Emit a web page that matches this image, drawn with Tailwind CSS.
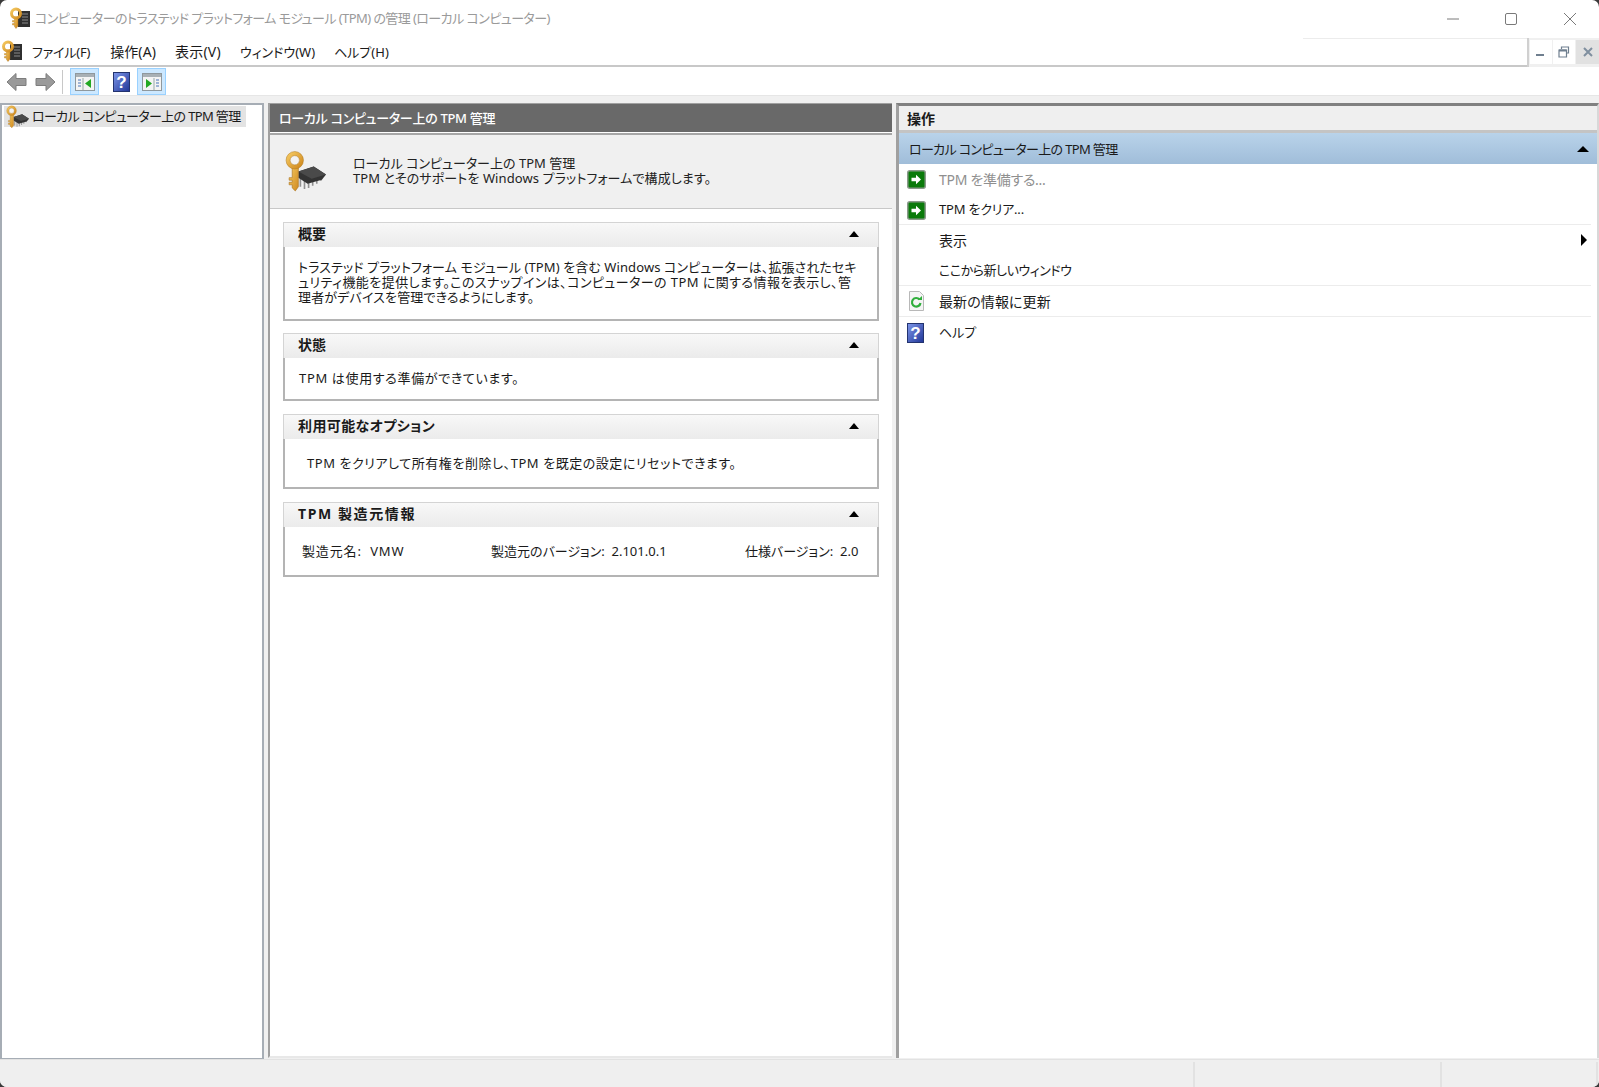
<!DOCTYPE html>
<html lang="ja">
<head>
    <meta charset="UTF-8">
    <title>TPM 管理</title>
    <script src="https://cdn.jsdelivr.net/npm/@tailwindcss/browser@4"></script>
</head>
<body class="bg-[#3a3a3a] overflow-hidden">
    <!-- shared icons -->
    <svg class="absolute w-0 h-0" xmlns="http://www.w3.org/2000/svg">
        <defs>
            <linearGradient id="helpfill" x1="0" y1="0" x2="1" y2="1">
                <stop offset="0" stop-color="#7f98ea"/>
                <stop offset="1" stop-color="#1f3496"/>
            </linearGradient>
            <linearGradient id="keyfill" x1="0" y1="0" x2="1" y2="1">
                <stop offset="0" stop-color="#f4c860"/>
                <stop offset="1" stop-color="#d08a20"/>
            </linearGradient>
        </defs>
        <symbol id="key" viewBox="0 0 42 42">
            <path d="M9 16h6v20l-3 4-3-3v-3h-3v-2.500h3v-2h-3v-2.500h3z" fill="url(#keyfill)" stroke="#a8701c" stroke-width=".6"/>
            <circle cx="11.500" cy="10" r="6.500" fill="none" stroke="url(#keyfill)" stroke-width="4"/>
            <circle cx="11.500" cy="10" r="8.500" fill="none" stroke="#b07a20" stroke-width=".5"/>
            <circle cx="11.500" cy="10" r="4.500" fill="#f3f3f3" stroke="#b07a20" stroke-width=".5"/>
        </symbol>
        <symbol id="keychip" viewBox="0 0 42 42">
            <path d="M17 27v9M21 29v9M25 30v7M29 29v6M33 28v5M37 26v4" stroke="#8f8f8f" stroke-width="1.600"/>
            <path d="M15 21l15-5 12 8-4 5-14 4-9-6z" fill="#333"/>
            <path d="M15 21l15-5 12 8-14 4z" fill="#4a4a4a"/>
            <use href="#key" width="42" height="42"/>
        </symbol>
        <symbol id="keybook" viewBox="0 0 20 22">
            <rect x="8" y="4" width="12" height="16" fill="#2f2f2f"/>
            <path d="M12 7h6M12 10h6M12 13h6M12 16h6" stroke="#8a8a8a" stroke-width="1"/>
            <path d="M4.500 10h3.500v9l-2 2.500-1.500-2v-1.500h-2v-1.500h2v-1.500h-2v-1.500h2z" fill="url(#keyfill)" stroke="#a8701c" stroke-width=".4"/>
            <circle cx="6" cy="6.500" r="4.500" fill="none" stroke="url(#keyfill)" stroke-width="3"/>
        </symbol>
        <symbol id="go" viewBox="0 0 19 19">
            <rect x=".75" y=".75" width="17.500" height="17.500" rx="2" fill="#0a7a0a" stroke="#8b9a8b" stroke-width="1.500"/>
            <path d="M4.500 7.800h4.500v-3l5 4.700-5 4.700v-3h-4.500z" fill="#fff"/>
        </symbol>
    </svg>

    <div class="w-[1599px] h-[1087px] flex flex-col bg-white rounded-[7px] overflow-hidden [font-family:'Noto_Sans','Noto_Sans_CJK_JP',sans-serif] [font-feature-settings:'palt'] text-[#1a1a1a]">

        <!-- Title bar -->
        <div class="h-[38px] shrink-0 flex items-center pl-[10px]">
            <svg class="w-[20px] h-[22px] mb-[2px]"><use href="#keybook"/></svg>
            <span class="ml-[5px] text-[13px] tracking-[-0.57px] text-[#9a9a9a] mb-[1px]">コンピューターのトラステッド プラットフォーム モジュール (TPM) の管理 (ローカル コンピューター)</span>
            <div class="ml-auto flex items-center">
                <svg class="w-[14px] h-[14px]" viewBox="0 0 14 14"><path d="M1 7h12" stroke="#7a7a7a"/></svg>
                <svg class="w-[14px] h-[14px] ml-[44px]" viewBox="0 0 14 14"><rect x="1.500" y="1.500" width="11" height="11" rx="1.500" fill="none" stroke="#7a7a7a"/></svg>
                <svg class="w-[14px] h-[14px] ml-[45px] mr-[22px]" viewBox="0 0 14 14"><path d="M1 1l12 12M13 1l-12 12" stroke="#7a7a7a"/></svg>
            </div>
        </div>

        <!-- Menu bar -->
        <div class="h-[29px] shrink-0 flex relative">
            <div class="flex-1 flex items-center border-b-2 border-[#c8c8c8] pl-[2px]">
                <svg class="w-[20px] h-[22px] mb-[2px]"><use href="#keybook"/></svg>
                <div class="flex items-baseline ml-[10px] mt-px">
                    <span class="mr-[20px] text-[13px] tracking-[-0.2px]">ファイル(F)</span>
                    <span class="mr-[19px] text-[14px] tracking-[0.1px]">操作(A)</span>
                    <span class="mr-[19px] text-[14px] tracking-[0.2px]">表示(V)</span>
                    <span class="mr-[19px] text-[13px]">ウィンドウ(W)</span>
                    <span class="text-[13px]">ヘルプ(H)</span>
                </div>
            </div>
            <!-- MDI buttons -->
            <div class="w-[72px] shrink-0 border-l-2 border-[#d0d0d0] flex pl-px pt-[2px] gap-px bg-[#f0f0f0]">
                <div class="w-[22px] h-[24px] bg-white flex items-center justify-center">
                    <svg class="w-[12px] h-[12px]" viewBox="0 0 12 12"><path d="M1 9h8" stroke="#6f7f8f" stroke-width="2"/></svg>
                </div>
                <div class="w-[22px] h-[24px] bg-white flex items-center justify-center">
                    <svg class="w-[12px] h-[12px]" viewBox="0 0 12 12"><path d="M3.500 3V1h7v6h-2M1 4h7.500v7h-7.500z" fill="none" stroke="#6f7f8f" stroke-width="1.200"/><path d="M1 4.500h7.500" stroke="#6f7f8f" stroke-width="2"/></svg>
                </div>
                <div class="w-[23px] h-[24px] bg-[#e1e1e1] flex items-center justify-center">
                    <svg class="w-[12px] h-[12px]" viewBox="0 0 12 12"><path d="M2 2l8 8M10 2l-8 8" stroke="#7f8f9f" stroke-width="2"/></svg>
                </div>
            </div>
            <div class="absolute left-[1303px] w-[224px] top-0 h-px bg-[#ececec]"></div>
        </div>

        <!-- Toolbar -->
        <div class="h-[27px] shrink-0 flex items-center pl-[6px] pt-px border-b border-[#e6e6e6] box-content">
            <svg class="w-[21px] h-[20px]" viewBox="0 0 21 20"><path d="M1 10l9-8.500v5h10v7h-10v5z" fill="#9a9a9a" stroke="#7d7d7d"/></svg>
            <svg class="w-[21px] h-[20px] ml-[8px]" viewBox="0 0 21 20"><path d="M20 10l-9-8.500v5h-10v7h10v5z" fill="#9a9a9a" stroke="#7d7d7d"/></svg>
            <div class="w-px h-[24px] bg-[#c8c8c8] ml-[6px]"></div>
            <div class="w-[29px] h-[27px] ml-[7px] bg-[#cce8ff] border border-[#99d1ff] flex items-center justify-center">
                <svg class="w-[20px] h-[18px]" viewBox="0 0 20 18">
                    <rect x=".5" y=".5" width="19" height="17" fill="#f4f4f4" stroke="#8f989d"/>
                    <rect x="1" y="1" width="18" height="3" fill="#a8b0b5"/>
                    <path d="M3 7h3M3 10h3M3 13h3" stroke="#4a74b8"/>
                    <path d="M8 5v12" stroke="#9aa"/>
                    <path d="M16 6v9l-6-4.500z" fill="#23a823"/>
                </svg>
            </div>
            <svg class="w-[17px] h-[20px] ml-[14px]" viewBox="0 0 17 20">
                <rect x=".5" y=".5" width="16" height="19" fill="url(#helpfill)" stroke="#23336f"/>
                <text x="8.500" y="16" text-anchor="middle" font-size="17" font-weight="700" font-family="Liberation Sans" fill="#fff">?</text>
            </svg>
            <div class="w-[29px] h-[27px] ml-[7px] bg-[#cce8ff] border border-[#99d1ff] flex items-center justify-center">
                <svg class="w-[20px] h-[18px]" viewBox="0 0 20 18">
                    <rect x=".5" y=".5" width="19" height="17" fill="#f4f4f4" stroke="#8f989d"/>
                    <rect x="1" y="1" width="18" height="3" fill="#a8b0b5"/>
                    <path d="M14 7h3M14 10h3M14 13h3" stroke="#4a74b8"/>
                    <path d="M12 5v12" stroke="#9aa"/>
                    <path d="M4 6v9l6-4.500z" fill="#23a823"/>
                </svg>
            </div>
        </div>

        <!-- Panes -->
        <div class="flex-1 flex bg-[#f0f0f0] pt-[7px] min-h-0">

            <!-- Tree -->
            <div class="w-[264px] h-[957px] shrink-0 bg-white border-t-2 border-x-2 border-b-2 border-[#a6adb5] pt-[1px] pl-[2px]">
                <div class="w-[242px] h-[21px] bg-[#e3e3e3] flex items-center pl-px">
                    <svg class="w-[24px] h-[24px] shrink-0"><use href="#keychip"/></svg>
                    <span class="ml-[3px] mt-px text-[13px] tracking-[-0.65px] whitespace-nowrap">ローカル コンピューター上の TPM 管理</span>
                </div>
            </div>

            <!-- Centre -->
            <div class="w-[624px] h-[955px] ml-[4px] shrink-0 bg-white border-t border-l-[2px] border-[#a0a0a0] border-b-2 border-b-[#e8e8e8] flex flex-col">
                <div class="h-[28px] pt-px shrink-0 bg-[#696969] text-white text-[13px] tracking-[-0.3px] font-medium flex items-center pl-[9px]">ローカル コンピューター上の TPM 管理</div>
                <div class="h-[3px] shrink-0 border-b-2 border-[#a6a6a6]"></div>
                <div class="h-[74px] shrink-0 bg-[#f0f0f0] border-b border-[#c8c8c8] flex items-center pl-[13px]">
                    <svg class="w-[43px] h-[43px] shrink-0"><use href="#keychip"/></svg>
                    <div class="ml-[27px] text-[13px] leading-[15px] mb-[1px] text-[#222]">
                        <p>ローカル コンピューター上の TPM 管理</p>
                        <p class="tracking-[0.1px]">TPM とそのサポートを Windows プラットフォームで構成します。</p>
                    </div>
                </div>

                <div class="pl-[13px] pt-[13px] flex flex-col gap-[12px]">
                    <div class="w-[596px] h-[99px] flex flex-col">
                        <div class="h-[25px] shrink-0 border-t border-x border-[#d4d4d4] bg-linear-to-b from-[#f8f8f8] to-[#ebebeb] flex items-center justify-between pl-[14px] pr-[19px]">
                            <span class="text-[14px] font-bold mb-[3px]">概要</span>
                            <span class="w-0 h-0 mb-[2px] border-x-[5px] border-x-transparent border-b-[6px] border-b-black"></span>
                        </div>
                        <div class="flex-1 border-x-2 border-b-2 border-[#b4b4b4] border-t-0 pl-[13px] pt-[13px] text-[13px] tracking-[0.1px] leading-[15px] whitespace-nowrap">
                            <p>トラステッド プラットフォーム モジュール (TPM) を含む Windows コンピューターは、拡張されたセキ</p>
                            <p class="tracking-[0.43px]">ュリティ機能を提供します。このスナップインは、コンピューターの TPM に関する情報を表示し、管</p>
                            <p class="tracking-[0.15px]">理者がデバイスを管理できるようにします。</p>
                        </div>
                    </div>

                    <div class="w-[596px] h-[68px] flex flex-col">
                        <div class="h-[25px] shrink-0 border-t border-x border-[#d4d4d4] bg-linear-to-b from-[#f8f8f8] to-[#ebebeb] flex items-center justify-between pl-[14px] pr-[19px]">
                            <span class="text-[14px] font-bold mb-[3px]">状態</span>
                            <span class="w-0 h-0 mb-[2px] border-x-[5px] border-x-transparent border-b-[6px] border-b-black"></span>
                        </div>
                        <div class="flex-1 border-x-2 border-b-2 border-[#b4b4b4] border-t-0 pl-[14px] pt-[13px] text-[13px] tracking-[0.65px] leading-[15px]">TPM は使用する準備ができています。</div>
                    </div>

                    <div class="w-[596px] h-[75px] mt-px flex flex-col">
                        <div class="h-[25px] shrink-0 border-t border-x border-[#d4d4d4] bg-linear-to-b from-[#f8f8f8] to-[#ebebeb] flex items-center justify-between pl-[14px] pr-[19px]">
                            <span class="text-[14px] font-bold tracking-[0.4px] mb-[3px]">利用可能なオプション</span>
                            <span class="w-0 h-0 mb-[2px] border-x-[5px] border-x-transparent border-b-[6px] border-b-black"></span>
                        </div>
                        <div class="flex-1 border-x-2 border-b-2 border-[#b4b4b4] border-t-0 pl-[22px] pt-[17px] text-[13px] tracking-[0.55px] leading-[15px]">TPM をクリアして所有権を削除し、TPM を既定の設定にリセットできます。</div>
                    </div>

                    <div class="w-[596px] h-[75px] mt-px flex flex-col">
                        <div class="h-[25px] shrink-0 border-t border-x border-[#d4d4d4] bg-linear-to-b from-[#f8f8f8] to-[#ebebeb] flex items-center justify-between pl-[14px] pr-[19px]">
                            <span class="text-[14px] font-bold tracking-[1.6px] mb-[3px]">TPM 製造元情報</span>
                            <span class="w-0 h-0 mb-[2px] border-x-[5px] border-x-transparent border-b-[6px] border-b-black"></span>
                        </div>
                        <div class="flex-1 border-x-2 border-b-2 border-[#b4b4b4] border-t-0 pl-[17px] pt-[17px] text-[13px] leading-[15px] flex">
                            <span class="w-[189px] tracking-[0.85px]">製造元名:&nbsp; VMW</span>
                            <span class="w-[254px]">製造元のバージョン:&nbsp; 2.101.0.1</span>
                            <span>仕様バージョン:&nbsp; 2.0</span>
                        </div>
                    </div>
                </div>
            </div>

            <!-- Actions -->
            <div class="w-[703px] h-[955px] ml-[4px] shrink-0 bg-white border-l-[3px] border-t-[3px] border-r-2 border-[#a0a0a0] border-t-[#808080] border-r-[#d8d8d8] flex flex-col">
                <div class="h-[24px] shrink-0 bg-[#efefef] text-[14px] font-bold flex items-center pl-[8px]">操作</div>
                <div class="h-[3px] shrink-0 bg-[#c4c4c4]"></div>
                <div class="h-[31px] shrink-0 bg-linear-to-b from-[#b9d3ea] to-[#a0bdd9] flex items-center justify-between pl-[10px] pr-[8px] text-[13px] tracking-[-0.65px]">
                    <span class="mt-[2px]">ローカル コンピューター上の TPM 管理</span>
                    <span class="w-0 h-0 border-x-[6px] border-x-transparent border-b-[6px] border-b-black"></span>
                </div>
                <div class="flex flex-col text-[14px] pr-[6px]">
                    <div class="h-[31px] flex items-center pl-[8px]">
                        <svg class="w-[19px] h-[19px]"><use href="#go"/></svg>
                        <span class="ml-[13px] text-[#8f8f8f] tracking-[-0.3px]">TPM を準備する...</span>
                    </div>
                    <div class="h-[30px] pt-px flex items-center pl-[8px] border-b border-[#ececec]">
                        <svg class="w-[19px] h-[19px]"><use href="#go"/></svg>
                        <span class="ml-[13px] text-[13px] tracking-[-0.2px]">TPM をクリア...</span>
                    </div>
                    <div class="h-[30px] flex items-center justify-between pl-[40px] pr-[4px]">
                        <span>表示</span>
                        <span class="w-0 h-0 border-y-[6px] border-y-transparent border-l-[6px] border-l-black"></span>
                    </div>
                    <div class="h-[31px] pt-px flex items-center pl-[40px] border-b border-[#ececec]">
                        <span class="text-[13px] tracking-[-0.45px]">ここから新しいウィンドウ</span>
                    </div>
                    <div class="h-[31px] flex items-center pl-[8px] border-b border-[#ececec]">
                        <svg class="w-[19px] h-[20px]" viewBox="0 0 19 20">
                            <path d="M2.500 .5h10l4 4v15h-14z" fill="#f4f4f4" stroke="#b8b8b8"/>
                            <path d="M13.500 12a4.300 4.300 0 1 1-1-3.500" fill="none" stroke="#2fae3c" stroke-width="2.200"/>
                            <path d="M10.500 9h4.500v-4z" fill="#2fae3c"/>
                        </svg>
                        <span class="ml-[13px] tracking-[0.1px]">最新の情報に更新</span>
                    </div>
                    <div class="h-[32px] flex items-center pl-[8px]">
                        <svg class="w-[17px] h-[20px]" viewBox="0 0 17 20">
                            <rect x=".5" y=".5" width="16" height="19" fill="url(#helpfill)" stroke="#23336f"/>
                            <text x="8.500" y="16" text-anchor="middle" font-size="17" font-weight="700" font-family="Liberation Sans" fill="#fff">?</text>
                        </svg>
                        <span class="ml-[15px] text-[13px]">ヘルプ</span>
                    </div>
                </div>
            </div>
        </div>

        <!-- Status bar -->
        <div class="h-[28px] shrink-0 bg-[#efefef] border-t border-[#e2e2e2] flex pt-[2px]">
            <div class="w-[1195px] border-r-2 border-[#e2e2e2]"></div>
            <div class="w-[247px] border-r-2 border-[#e2e2e2]"></div>
            <div class="w-[156px] border-r-2 border-[#e2e2e2]"></div>
        </div>
    </div>
</body>
</html>
